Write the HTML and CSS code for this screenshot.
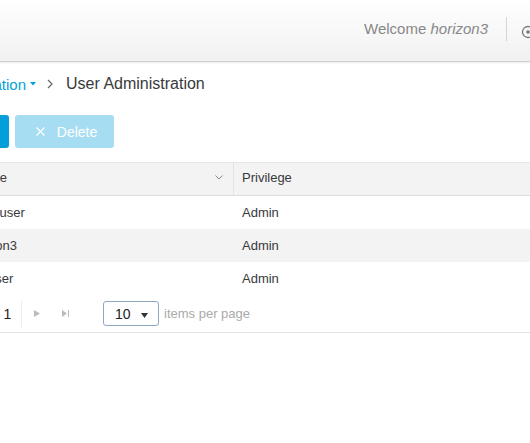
FILE: index.html
```html
<!DOCTYPE html>
<html>
<head>
<meta charset="utf-8">
<link rel="stylesheet" href="styles.css">
</head>
<body>
<header class="topbar">
  <span class="welcome">Welcome <em>horizon3</em></span>
  <span class="sep"></span>
  <span class="top-icon">
    <svg width="14" height="14" viewBox="0 0 14 14"><circle cx="7" cy="7" r="5.5" fill="none" stroke="#777" stroke-width="1.3"/><circle cx="7" cy="7" r="1.8" fill="#777"/></svg>
  </span>
</header>
<main class="content">
  <nav class="crumbs">
    <span class="crumb-link">Administration</span>
    <svg class="caret" width="6" height="4" viewBox="0 0 6 4"><path d="M0 0H6L3 3.5Z" fill="#049fd9"/></svg>
    <svg class="crumb-sep" width="6" height="10" viewBox="0 0 6 10"><path d="M1 1L5 5L1 9" fill="none" stroke="#666" stroke-width="1.2"/></svg>
    <span class="crumb-current">User Administration</span>
  </nav>
  <div class="toolbar">
    <button class="btn btn-primary">+ Add</button>
    <button class="btn btn-disabled">
      <svg width="9" height="9" viewBox="0 0 9 9"><path d="M0.5 0.5L8.5 8.5M8.5 0.5L0.5 8.5" stroke="#fff" stroke-width="1.1"/></svg>
      <span>Delete</span>
    </button>
  </div>
  <div class="grid">
    <div class="row head">
      <div class="cell c1 hcell">
        <span>Username</span>
        <svg class="chev" width="8" height="5" viewBox="0 0 8 5"><path d="M0.5 0.5L4 4L7.5 0.5" fill="none" stroke="#888" stroke-width="1"/></svg>
      </div>
      <div class="cell c2">Privilege</div>
    </div>
    <div class="row">
      <div class="cell c1 bcell">superuser</div>
      <div class="cell c2">Admin</div>
    </div>
    <div class="row alt">
      <div class="cell c1 bcell">horizon3</div>
      <div class="cell c2">Admin</div>
    </div>
    <div class="row">
      <div class="cell c1 bcell">testuser</div>
      <div class="cell c2">Admin</div>
    </div>
    <div class="pager">
      <span class="pg-btn"><svg width="7" height="7" viewBox="0 0 7 7"><path d="M0.5 0V7" stroke="#bbb"/><path d="M7 0V7L2 3.5Z" fill="#bbb"/></svg></span>
      <span class="pg-btn"><svg width="6" height="7" viewBox="0 0 6 7"><path d="M6 0V7L0 3.5Z" fill="#bbb"/></svg></span>
      <span class="pg-num">1</span>
      <span class="pg-btn next"><svg width="6" height="7" viewBox="0 0 6 7"><path d="M0 0V7L6 3.5Z" fill="#bbb"/></svg></span>
      <span class="pg-btn last"><svg width="7" height="7" viewBox="0 0 7 7"><path d="M0 0V7L5 3.5Z" fill="#bbb"/><path d="M6.5 0V7" stroke="#bbb"/></svg></span>
      <span class="pg-select">
        <span>10</span>
        <svg width="7" height="5" viewBox="0 0 7 5"><path d="M0 0H7L3.5 5Z" fill="#333"/></svg>
      </span>
      <span class="pg-label">items per page</span>
    </div>
  </div>
</main>
</body>
</html>
```

FILE: styles.css
```css
html, body {
  margin: 0;
  padding: 0;
  overflow: hidden;
  background: #fff;
  font-family: "Liberation Sans", Arial, Helvetica, sans-serif;
  color: #39393b;
}

.topbar {
  height: 61px;
  display: flex;
  align-items: center;
  justify-content: flex-end;
  background: linear-gradient(#ffffff, #f1f1f1);
  border-bottom: 1px solid #cfcfcf;
  box-shadow: 0 1px 2px rgba(0, 0, 0, 0.08);
  overflow: hidden;
}

.welcome {
  font-size: 15px;
  color: #888;
  margin-top: -4px;
}

.welcome em {
  font-style: italic;
}

.sep {
  width: 1px;
  height: 24px;
  background: #d6d6d6;
  margin: 0 14px 0 18px;
  margin-top: -3px;
}

.top-icon {
  display: flex;
  margin-right: -5px;
  margin-top: 2px;
}

.content {
  margin-left: -69px;
  width: 900px;
}

.crumbs {
  display: flex;
  align-items: center;
  height: 20px;
  margin-top: 12px;
  font-size: 15px;
}

.crumb-link {
  color: #049fd9;
}

.caret {
  margin-left: 4px;
}

.crumb-sep {
  margin-left: 11px;
}

.crumb-current {
  margin-left: 13px;
  color: #39393b;
  font-size: 16px;
}

.toolbar {
  display: flex;
  gap: 6px;
  margin-top: 21px;
  margin-left: 8px;
}

.btn {
  height: 33px;
  border: none;
  border-radius: 3px;
  font-family: inherit;
  font-size: 13px;
  color: #fff;
  display: flex;
  align-items: center;
  justify-content: center;
  padding: 0;
}

.btn-primary {
  width: 70px;
  background: #049fd9;
}

.btn-disabled {
  width: 99px;
  background: #a7ddf2;
  gap: 12px;
  padding-left: 4px;
  font-size: 14px;
}

.grid {
  margin-top: 14px;
  margin-left: 8px;
  border-top: 1px solid #e6e6e6;
}

.row {
  display: flex;
  height: 33px;
  font-size: 13px;
}

.row.head {
  background: #f3f3f3;
  border-bottom: 1px solid #dedede;
  height: 32px;
}

.row.head .cell {
  padding-bottom: 3px;
}

.row.alt {
  background: #f3f3f3;
}

.cell {
  display: flex;
  align-items: center;
  box-sizing: border-box;
}

.c1 {
  width: 295px;
  padding-left: 8px;
}

.hcell {
  border-right: 1px solid #e2e2e2;
  justify-content: space-between;
  padding-right: 10px;
}

.bcell {
  padding-left: 28px;
}

.c2 {
  padding-left: 8px;
  flex: 1;
}

.pager {
  display: flex;
  align-items: center;
  height: 37px;
  border-bottom: 1px solid #e4e4e4;
  font-size: 13px;
}

.pg-btn {
  width: 24px;
  height: 24px;
  display: flex;
  align-items: center;
  justify-content: center;
}

.pg-num {
  width: 28px;
  height: 26px;
  margin-left: 7px;
  box-sizing: border-box;
  border-right: 1px solid #eeeeee;
  display: flex;
  align-items: center;
  justify-content: center;
  font-size: 14px;
  color: #222;
}

.pg-btn.next {
  margin-left: 3px;
}

.pg-btn.last {
  margin-left: 4px;
}

.pg-select {
  margin-left: 26px;
  width: 56px;
  height: 25px;
  box-sizing: border-box;
  border: 1px solid #8fa8c2;
  border-radius: 3px;
  display: flex;
  align-items: center;
  justify-content: space-between;
  padding: 0 10px 0 11px;
  font-size: 14px;
  color: #222;
}

.pg-select svg {
  margin-top: 3px;
}

.pg-label {
  margin-left: 5px;
  color: #aaa;
}
```
